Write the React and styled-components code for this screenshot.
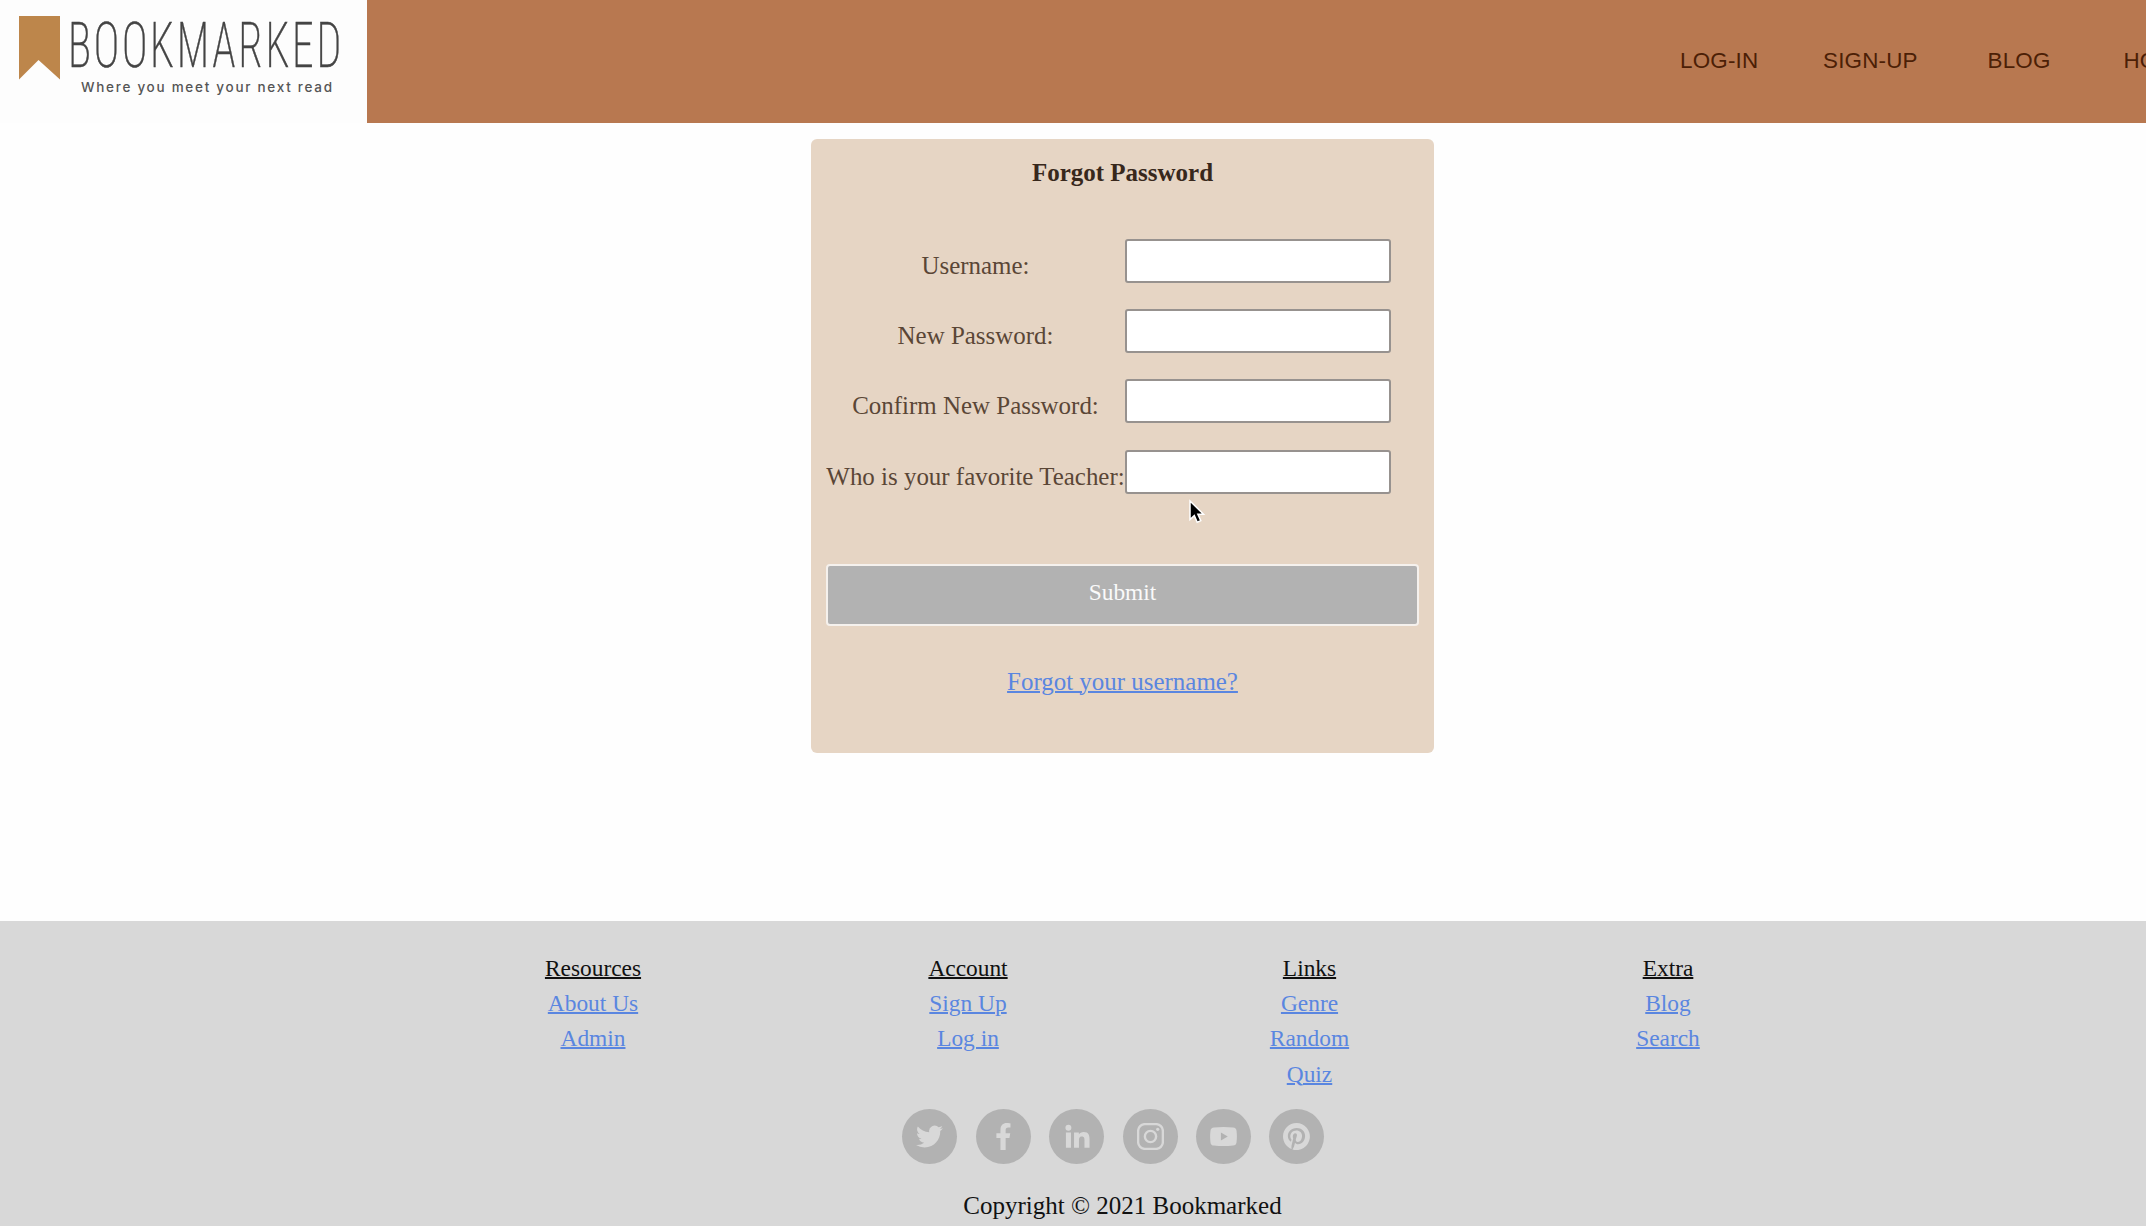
import React from 'react';
import styled, { createGlobalStyle } from 'styled-components';

const GlobalStyle = createGlobalStyle`
  *, *::before, *::after { box-sizing: border-box; }
  html, body { margin: 0; height: 1226px; overflow: hidden; background: #fefefe; }
  body { font-family: 'Liberation Serif', 'Times New Roman', serif; }
`;

const Page = styled.div`
  width: 2245px;
  height: 1226px;
  display: flex;
  flex-direction: column;
`;

const Header = styled.header`
  display: flex;
  height: 123px;
  flex: none;
  background: #b87850;
`;

const Logo = styled.a`
  width: 367px;
  height: 123px;
  background: #fdfdfd;
  svg { display: block; overflow: visible; }
`;

const LogoName = styled.text`
  font-family: Roboto, sans-serif;
  font-size: 63px;
  font-weight: 200;
  font-stretch: 75%;
  letter-spacing: 4px;
  fill: #444;
  stroke: #444;
  stroke-width: 0.5px;
`;

const LogoTagline = styled.text`
  font-family: Inter, sans-serif;
  font-size: 13.5px;
  font-weight: 500;
  fill: #555;
`;

const Nav = styled.nav`
  flex: 1;
  display: flex;
  justify-content: flex-end;
  align-items: center;
  padding-bottom: 2px;
`;

const NavLink = styled.a`
  width: ${(p) => p.$width}px;
  flex: none;
  font: 22.4px/30px 'Liberation Sans', Arial, sans-serif;
  letter-spacing: 0.2px;
  color: #4c1f06;
`;

const Main = styled.main`
  height: 798px;
  flex: none;
  padding-top: 16px;
`;

const Card = styled.form`
  position: relative;
  width: 623px;
  height: 614px;
  margin: 0 auto;
  padding: 17px 15px 0;
  border-radius: 6px;
  background: #e6d5c4;
  display: flex;
  flex-direction: column;
`;

const Title = styled.h1`
  margin: 0 0 48.5px;
  font-size: 25px;
  line-height: 34px;
  text-align: center;
  color: #38281c;
`;

const Fields = styled.div`
  display: flex;
  flex-direction: column;
  gap: 26.4px;
`;

const Field = styled.div`
  display: flex;
  height: 44px;
`;

const Label = styled.label`
  width: 299px;
  padding-top: 5px;
  font-size: 24.95px;
  line-height: 44px;
  text-align: center;
  white-space: nowrap;
  color: #5a4636;
`;

const Input = styled.input`
  width: 266px;
  height: 44px;
  padding: 0 8px;
  border: 2px solid #97928f;
  border-radius: 3px;
  background: #fff;
  outline: none;
`;

const Submit = styled.button`
  height: 62px;
  margin-top: 70px;
  padding: 0 0 4px;
  border: 2px solid #f5f1ed;
  border-radius: 4px;
  background: #b2b2b2;
  color: #fafafa;
  font: 23.4px 'Liberation Serif', 'Times New Roman', serif;
`;

const TextLink = styled.a`
  color: #5a86e0;
  text-decoration: underline;
  text-decoration-thickness: 1.5px;
`;

const Recover = styled.p`
  margin: 41px 0 0;
  font-size: 24.95px;
  line-height: 30px;
  text-align: center;
`;

const Pointer = styled.svg`
  position: absolute;
  left: 377px;
  top: 360px;
`;

const Footer = styled.footer`
  flex: 1;
  padding-top: 29.6px;
  background: #d8d8d8;
`;

const Columns = styled.div`
  display: flex;
  height: 142px;
  padding-left: 400px;
`;

const Column = styled.section`
  width: ${(p) => p.$width}px;
  display: flex;
  flex-direction: column;
  align-items: center;
  font-size: 23.4px;
  line-height: 35.4px;
`;

const Heading = styled.h2`
  margin: 0;
  font: inherit;
  color: #111;
  text-decoration: underline;
  text-decoration-thickness: 1.5px;
`;

const Socials = styled.div`
  display: flex;
  justify-content: center;
  margin-top: 16px;
`;

const Social = styled.a`
  width: 55px;
  height: 55px;
  margin-right: 18.4px;
  border-radius: 50%;
  background: #b2b2b2;
  display: flex;
  align-items: center;
  justify-content: center;
`;

const Copyright = styled.p`
  margin: 27px 0 0;
  font-size: 25px;
  line-height: 30px;
  text-align: center;
  color: #111;
`;

const nav = [
  { label: 'LOG-IN', width: 143 },
  { label: 'SIGN-UP', width: 164.5 },
  { label: 'BLOG', width: 136 },
  { label: 'HOME', width: 121.5 },
];

const questions = ['Username:', 'New Password:', 'Confirm New Password:', 'Who is your favorite Teacher:'];

const columns = [
  { title: 'Resources', width: 386, links: ['About Us', 'Admin'] },
  { title: 'Account', width: 364, links: ['Sign Up', 'Log in'] },
  { title: 'Links', width: 319, links: ['Genre', 'Random', 'Quiz'] },
  { title: 'Extra', width: 398, links: ['Blog', 'Search'] },
];

const glyphs = {
  twitter: (
    <path d="M23.95 4.57a10 10 0 0 1-2.82.77 4.96 4.96 0 0 0 2.16-2.72c-.95.55-2 .95-3.13 1.18a4.92 4.92 0 0 0-8.38 4.48C7.69 8.1 4.07 6.13 1.64 3.16a4.92 4.92 0 0 0 1.52 6.57 4.9 4.9 0 0 1-2.23-.61v.06a4.92 4.92 0 0 0 3.95 4.83 5 5 0 0 1-2.21.08 4.94 4.94 0 0 0 4.6 3.42A9.87 9.87 0 0 1 0 19.54a13.99 13.99 0 0 0 7.55 2.21c9.05 0 14-7.5 14-13.98 0-.21 0-.42-.02-.63a9.94 9.94 0 0 0 2.42-2.57z" />
  ),
  facebook: (
    <path d="M9.3 24V13.3H5.7V9.2h3.6V6c0-3.7 2.2-5.9 5.6-5.9 1.6 0 3.3.3 3.3.3v3.7h-1.9c-1.9 0-2.4 1.1-2.4 2.3v2.8h4.1l-.7 4.1h-3.4V24z" />
  ),
  linkedin: (
    <path d="M2.6 8.4h4.5V22H2.6zM4.8 1.6a2.65 2.65 0 1 1 0 5.3 2.65 2.65 0 0 1 0-5.3zM9.8 8.4h4.3v1.9c.7-1.3 2.2-2.3 4.3-2.3 4.5 0 5.2 3 5.2 6.8V22h-4.5v-6.5c0-1.6 0-3.6-2.3-3.6s-2.6 1.7-2.6 3.5V22H9.8z" />
  ),
  instagram: (
    <g fill="none" stroke="#d8d8d8" strokeWidth="2.1">
      <rect x="1" y="1" width="22" height="22" rx="6" />
      <circle cx="12" cy="12" r="5" />
      <circle cx="18.4" cy="5.6" r="1.4" fill="#d8d8d8" stroke="none" />
    </g>
  ),
  youtube: (
    <path fillRule="evenodd" d="M3.5 3.9Q12 3 20.5 3.9 23.4 4.2 23.6 7q.6 5 0 10-.3 2.7-3.1 3.1-8.5.9-17 0Q.7 19.8.4 17q-.6-5 0-10Q.7 4.2 3.5 3.9zM9.7 8.5v7l6.1-3.5z" />
  ),
  pinterest: (
    <path d="M12 0C5.37 0 0 5.37 0 12c0 5.08 3.16 9.42 7.63 11.17-.1-.95-.2-2.4.04-3.44l1.4-5.96s-.36-.72-.36-1.78c0-1.66.97-2.91 2.17-2.91 1.02 0 1.51.77 1.51 1.69 0 1.03-.65 2.57-.99 3.99-.28 1.19.6 2.17 1.77 2.17 2.13 0 3.77-2.25 3.77-5.49 0-2.87-2.06-4.88-5.01-4.88-3.41 0-5.41 2.56-5.41 5.2 0 1.03.39 2.14.89 2.74.1.12.11.22.08.35l-.33 1.36c-.05.22-.17.27-.4.16-1.5-.69-2.43-2.88-2.43-4.64 0-3.78 2.75-7.25 7.92-7.25 4.16 0 7.39 2.97 7.39 6.93 0 4.13-2.6 7.46-6.22 7.46-1.21 0-2.36-.63-2.75-1.38l-.75 2.85c-.27 1.04-1 2.35-1.49 3.15A12 12 0 1 0 12 0z" />
  ),
};

export default function App() {
  return (
    <>
      <GlobalStyle />
      <Page>
        <Header>
          <Logo>
            <svg width="367" height="123" viewBox="0 0 367 123">
              <path d="M19 16H60V79.5L38.5 60 19 79.5Z" fill="#bd864b" />
              <LogoName x="68" y="67" textLength="276" lengthAdjust="spacingAndGlyphs">BOOKMARKED</LogoName>
              <LogoTagline x="81" y="92" textLength="251">Where you meet your next read</LogoTagline>
            </svg>
          </Logo>
          <Nav>
            {nav.map((n) => <NavLink key={n.label} $width={n.width}>{n.label}</NavLink>)}
          </Nav>
        </Header>
        <Main>
          <Card>
            <Title>Forgot Password</Title>
            <Fields>
              {questions.map((q, i) => (
                <Field key={q}>
                  <Label htmlFor={`field-${i}`}>{q}</Label>
                  <Input id={`field-${i}`} />
                </Field>
              ))}
            </Fields>
            <Submit type="button">Submit</Submit>
            <Recover><TextLink>Forgot your username?</TextLink></Recover>
            <Pointer width="20" height="28" viewBox="0 0 20 28">
              <path d="M2 2V20.5L6.3 16.6 9.2 23.3 12.8 21.7 9.9 15.2H15.5Z" fill="#000" stroke="#fff" strokeWidth="1.5" />
            </Pointer>
          </Card>
        </Main>
        <Footer>
          <Columns>
            {columns.map((c) => (
              <Column key={c.title} $width={c.width}>
                <Heading>{c.title}</Heading>
                {c.links.map((l) => <TextLink key={l}>{l}</TextLink>)}
              </Column>
            ))}
          </Columns>
          <Socials>
            {Object.entries(glyphs).map(([name, glyph]) => (
              <Social key={name} aria-label={name}>
                <svg width="27" height="27" viewBox="0 0 24 24" fill="#d8d8d8">{glyph}</svg>
              </Social>
            ))}
          </Socials>
          <Copyright>Copyright © 2021 Bookmarked</Copyright>
        </Footer>
      </Page>
    </>
  );
}
